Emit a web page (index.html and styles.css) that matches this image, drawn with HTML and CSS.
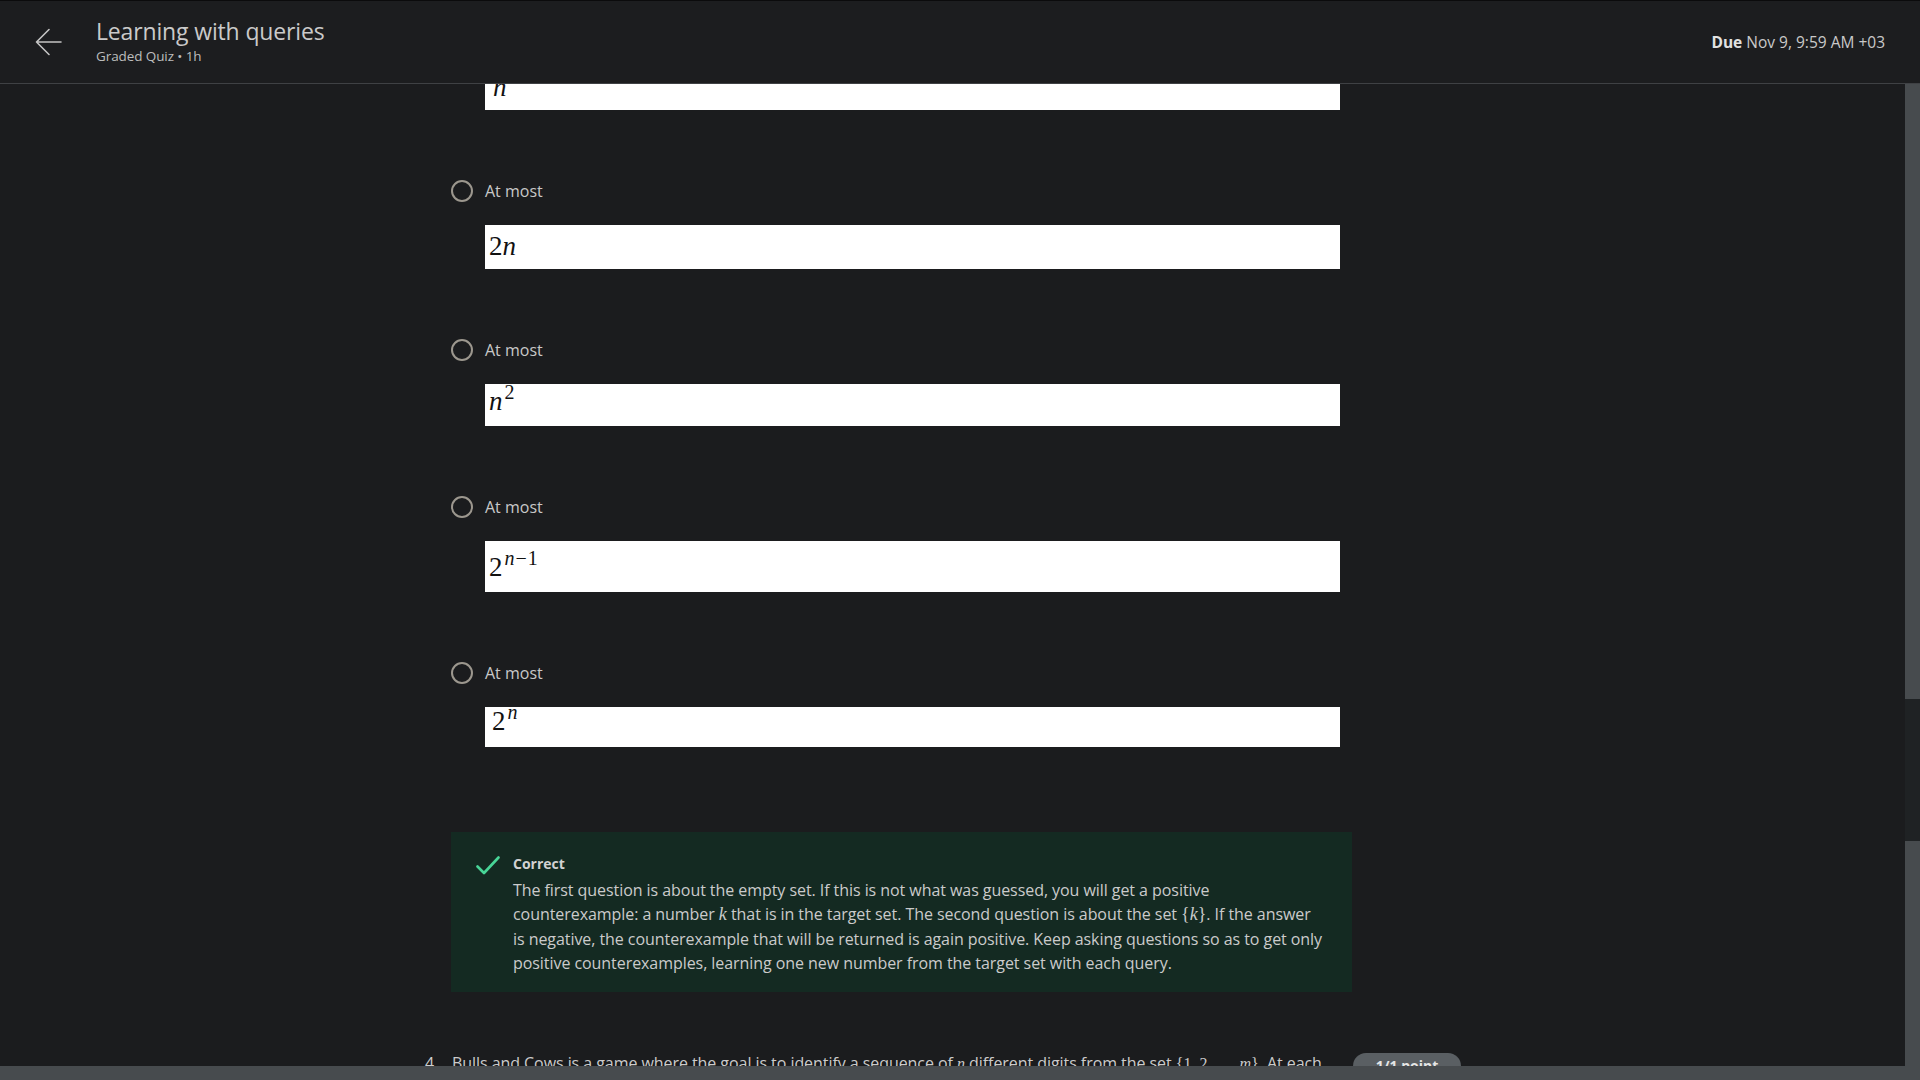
FILE: index.html
```html
<!DOCTYPE html>
<html lang="en">
<head>
<meta charset="utf-8">
<title>Learning with queries</title>
<link rel="stylesheet" href="styles.css">
</head>
<body>
<header class="topbar">
  <a class="back" aria-label="Back">
    <svg width="27" height="28" viewBox="0 0 27 28" fill="none" stroke="#c4c4c4" stroke-width="1.6" stroke-linecap="round" stroke-linejoin="round"><path d="M26 14H1.5M14 1.5L1.5 14L14 26.5"/></svg>
  </a>
  <div class="titles">
    <h1 class="title">Learning with queries</h1>
    <div class="subtitle">Graded Quiz • 1h</div>
  </div>
  <div class="due"><b>Due</b> Nov 9, 9:59 AM +03</div>
</header>

<main class="viewport">
  <div class="quiz">
    <div class="answer box-1"><span class="math"><i>n</i></span></div>

    <div class="option">
      <label class="choice"><span class="radio"></span><span>At most</span></label>
      <div class="answer box-2"><span class="math">2<i>n</i></span></div>
    </div>

    <div class="option">
      <label class="choice"><span class="radio"></span><span>At most</span></label>
      <div class="answer box-3"><span class="math"><i>n</i><span class="sup">2</span></span></div>
    </div>

    <div class="option">
      <label class="choice"><span class="radio"></span><span>At most</span></label>
      <div class="answer box-4"><span class="math">2<span class="sup"><i>n</i><span class="minus">−</span>1</span></span></div>
    </div>

    <div class="option">
      <label class="choice"><span class="radio"></span><span>At most</span></label>
      <div class="answer box-5"><span class="math">2<span class="sup"><i>n</i></span></span></div>
    </div>

    <section class="feedback">
      <svg class="check" width="24" height="19" viewBox="0 0 24 19" fill="none" stroke="#48d597" stroke-width="2.6" stroke-linecap="round" stroke-linejoin="round"><path d="M1.5 10.5L8 17L22.5 1.5"/></svg>
      <div class="feedback-body">
        <div class="feedback-title">Correct</div>
        <p>The first question is about the empty set. If this is not what was guessed, you will get a positive counterexample: a number <span class="imath"><i>k</i></span> that is in the target set. The second question is about the set <span class="imath">{<i>k</i>}</span>. If the answer is negative, the counterexample that will be returned is again positive. Keep asking questions so as to get only positive counterexamples, learning one new number from the target set with each query.</p>
      </div>
    </section>

    <div class="question">
      <span class="qnum">4.</span>
      <p class="qtext">Bulls and Cows is a game where the goal is to identify a sequence of <span class="imath"><i>n</i></span> different digits from the set <span class="imath">{1, 2, …, <i>m</i>}</span>. At each step, you guess a sequence and learn how many digits are correct.</p>
      <span class="badge">1/1 point</span>
    </div>
  </div>
</main>

<div class="vscroll"><div class="vthumb"></div></div>
<div class="hscroll"></div>
</body>
</html>
```
FILE: styles.css
```css
* { box-sizing: border-box; }
html, body { margin: 0; padding: 0; }
body {
  width: 1920px;
  height: 1080px;
  overflow: hidden;
  background: #1b1c1e;
  color: #cfcfcf;
  font-family: "Open Sans", "Noto Sans", sans-serif;
  position: relative;
}

.topbar {
  height: 84px;
  border-top: 1px solid #0b0b0c;
  border-bottom: 1px solid #3f4144;
  background: #1c1d1f;
  display: flex;
  align-items: flex-start;
  padding-left: 35px;
  padding-right: 35px;
}
.back {
  display: block;
  width: 27px;
  height: 28px;
  margin-top: 27px;
}
.back svg { display: block; }
.titles {
  margin-left: 34px;
  padding-top: 14px;
}
.title {
  margin: 0;
  font-size: 23px;
  line-height: 32px;
  font-weight: 400;
  color: #cacaca;
  letter-spacing: -0.15px;
}
.subtitle {
  font-size: 13.5px;
  line-height: 18px;
  color: #bdbdbd;
  letter-spacing: -0.1px;
}
.due {
  margin-left: auto;
  padding-top: 29px;
  font-size: 15.5px;
  line-height: 24px;
  color: #c9c9c9;
}
.due b { color: #e2e2e2; font-weight: 700; }

.viewport {
  height: 996px;
  overflow: hidden;
}
.quiz {
  width: 901px;
  margin-left: 451px;
  margin-top: -17px;
}

.answer {
  margin-left: 34px;
  width: 855px;
  background: #ffffff;
  color: #111;
  padding-left: 4px;
}
.math {
  font-family: "Liberation Serif", "DejaVu Serif", serif;
  font-size: 27px;
  line-height: 27px;
  display: inline-block;
}
.math i { font-style: italic; }
.sup {
  font-size: 20px;
  line-height: 0;
  position: relative;
  top: -11px;
  margin-left: 2px;
}
.minus { margin: 0 1px; }
.box-1 { height: 43px; padding-top: 7px; padding-left: 8px; }
.box-2 { height: 44px; padding-top: 8px; }
.box-3 { height: 42px; padding-top: 4px; }
.box-4 { height: 51px; padding-top: 13px; }
.box-5 { height: 40px; padding-top: 1px; padding-left: 7px; }

.option { margin-top: 70px; }
.choice {
  display: flex;
  align-items: center;
  height: 22px;
  font-size: 16px;
  color: #c8c8c8;
}
.radio {
  width: 22px;
  height: 22px;
  border: 2.5px solid #9c978e;
  border-radius: 50%;
  margin-right: 12px;
  flex: none;
}
.option .answer { margin-top: 23px; }

.feedback {
  margin-top: 85px;
  width: 901px;
  height: 160px;
  background: #142a22;
  display: flex;
  align-items: flex-start;
  padding: 22px 24px 0 25px;
}
.check { flex: none; margin-top: 2px; }
.feedback-body { margin-left: 13px; width: 811px; flex: none; }
.feedback-title {
  font-size: 14px;
  font-weight: 700;
  line-height: 20px;
  color: #d2d2d2;
}
.feedback p {
  margin: 4px 0 0;
  font-size: 16px;
  line-height: 24.3px;
  color: #cbcbcb;
  letter-spacing: -0.06px;
}
.imath {
  font-family: "Liberation Serif", "DejaVu Serif", serif;
  font-size: 18px;
  letter-spacing: 0;
}

.question {
  margin-top: 59px;
  margin-left: -26px;
  width: 1040px;
  display: flex;
  align-items: flex-start;
}
.qnum {
  width: 27px;
  flex: none;
  font-size: 16px;
  line-height: 24px;
}
.qtext {
  margin: 0;
  width: 884px;
  flex: none;
  font-size: 16px;
  line-height: 24px;
  color: #cbcbcb;
  letter-spacing: -0.06px;
}
.qtext .imath { font-size: 16px; }
.badge {
  margin-left: 17px;
  margin-top: 2px;
  flex: none;
  width: 108px;
  height: 26px;
  border-radius: 13px;
  background: #5a5f63;
  color: #e6e6e6;
  font-size: 14px;
  font-weight: 700;
  line-height: 26px;
  text-align: center;
}

.vscroll {
  position: absolute;
  top: 84px;
  right: 0;
  width: 15px;
  bottom: 0;
  background: #474b4e;
}
.vthumb {
  position: absolute;
  left: 0;
  right: 0;
  top: 615px;
  height: 142px;
  background: #1f2224;
}
.hscroll {
  position: absolute;
  left: 0;
  right: 0;
  bottom: 0;
  height: 14px;
  background: #474b4e;
}
```
